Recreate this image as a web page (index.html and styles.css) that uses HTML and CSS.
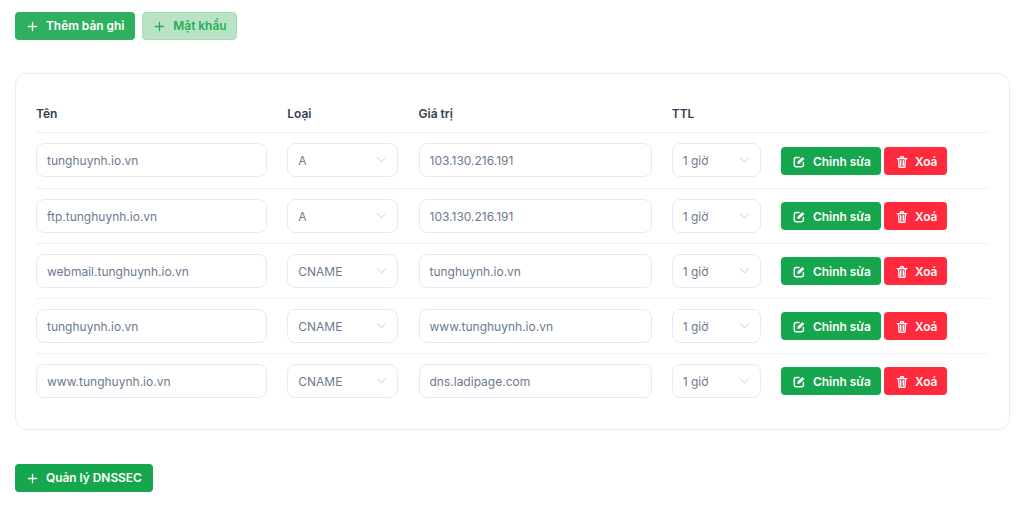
FILE: index.html
```html
<!DOCTYPE html>
<html lang="vi">
<head>
<meta charset="utf-8">
<title>DNS</title>
<link rel="stylesheet" href="styles.css">
</head>
<body>
<svg class="defs" width="0" height="0" aria-hidden="true">
  <symbol id="plus" viewBox="0 0 12 12"><path d="M6 1.5v9M1.5 6h9" fill="none" stroke="currentColor" stroke-width="1.4" stroke-linecap="round"/></symbol>
  <symbol id="edit" viewBox="0 0 12 12"><path d="M10.4 6.6v2.4a1.7 1.7 0 0 1-1.7 1.7H3a1.7 1.7 0 0 1-1.7-1.7V3.3A1.7 1.7 0 0 1 3 1.6h3" fill="none" stroke="currentColor" stroke-width="1.5" stroke-linecap="round"/><path d="M4.3 7.9l.4-2.3L9.4.9l2 2-4.7 4.6z" fill="currentColor"/></symbol>
  <symbol id="trash" viewBox="0 0 12 12"><path d="M4.2 2.2 4.8.8h2.4l.6 1.4M1.2 2.6h9.6" fill="none" stroke="currentColor" stroke-width="1.4" stroke-linecap="round" stroke-linejoin="round"/><path d="M2.5 3l.5 7.5c0 .5.3.8.8.8h4.4c.5 0 .8-.3.8-.8l.5-7.5M4.7 4.8v4.5M7.3 4.8v4.5" fill="none" stroke="currentColor" stroke-width="1.4" stroke-linecap="round" stroke-linejoin="round"/></symbol>
  <symbol id="chev" viewBox="0 0 12 8"><path d="M1.5 1.5 6 6l4.5-4.5" fill="none" stroke="currentColor" stroke-width="1.1" stroke-linecap="round" stroke-linejoin="round"/></symbol>
</svg>

<div class="toolbar">
  <button class="btn green wide"><svg class="ico"><use href="#plus"/></svg>Thêm bản ghi</button>
  <button class="btn soft wide"><svg class="ico"><use href="#plus"/></svg>Mật khẩu</button>
</div>

<section class="card">
  <div class="row head">
    <div>Tên</div><div>Loại</div><div>Giá trị</div><div>TTL</div><div></div>
  </div>

  <div class="row">
    <div class="field">tunghuynh.io.vn</div>
    <div class="field select">A<svg class="chev"><use href="#chev"/></svg></div>
    <div class="field">103.130.216.191</div>
    <div class="field select">1 giờ<svg class="chev"><use href="#chev"/></svg></div>
    <div class="actions">
      <button class="btn green2 edit"><svg class="ico"><use href="#edit"/></svg>Chỉnh sửa</button>
      <button class="btn red del"><svg class="ico"><use href="#trash"/></svg>Xoá</button>
    </div>
  </div>

  <div class="row">
    <div class="field">ftp.tunghuynh.io.vn</div>
    <div class="field select">A<svg class="chev"><use href="#chev"/></svg></div>
    <div class="field">103.130.216.191</div>
    <div class="field select">1 giờ<svg class="chev"><use href="#chev"/></svg></div>
    <div class="actions">
      <button class="btn green2 edit"><svg class="ico"><use href="#edit"/></svg>Chỉnh sửa</button>
      <button class="btn red del"><svg class="ico"><use href="#trash"/></svg>Xoá</button>
    </div>
  </div>

  <div class="row">
    <div class="field">webmail.tunghuynh.io.vn</div>
    <div class="field select">CNAME<svg class="chev"><use href="#chev"/></svg></div>
    <div class="field">tunghuynh.io.vn</div>
    <div class="field select">1 giờ<svg class="chev"><use href="#chev"/></svg></div>
    <div class="actions">
      <button class="btn green2 edit"><svg class="ico"><use href="#edit"/></svg>Chỉnh sửa</button>
      <button class="btn red del"><svg class="ico"><use href="#trash"/></svg>Xoá</button>
    </div>
  </div>

  <div class="row">
    <div class="field">tunghuynh.io.vn</div>
    <div class="field select">CNAME<svg class="chev"><use href="#chev"/></svg></div>
    <div class="field">www.tunghuynh.io.vn</div>
    <div class="field select">1 giờ<svg class="chev"><use href="#chev"/></svg></div>
    <div class="actions">
      <button class="btn green2 edit"><svg class="ico"><use href="#edit"/></svg>Chỉnh sửa</button>
      <button class="btn red del"><svg class="ico"><use href="#trash"/></svg>Xoá</button>
    </div>
  </div>

  <div class="row">
    <div class="field">www.tunghuynh.io.vn</div>
    <div class="field select">CNAME<svg class="chev"><use href="#chev"/></svg></div>
    <div class="field">dns.ladipage.com</div>
    <div class="field select">1 giờ<svg class="chev"><use href="#chev"/></svg></div>
    <div class="actions">
      <button class="btn green2 edit"><svg class="ico"><use href="#edit"/></svg>Chỉnh sửa</button>
      <button class="btn red del"><svg class="ico"><use href="#trash"/></svg>Xoá</button>
    </div>
  </div>
</section>

<div class="footer">
  <button class="btn green2 wide"><svg class="ico"><use href="#plus"/></svg>Quản lý DNSSEC</button>
</div>
</body>
</html>
```

FILE: styles.css
```css
* { box-sizing: border-box; }
html, body { margin: 0; background: #fff; }
body {
  height: 522px;
  overflow: hidden;
  padding: 12px 14px 0 15px;
  font-family: Inter, "Liberation Sans", sans-serif;
  font-size: 12px;
  color: #334155;
}
.defs { position: absolute; }
.toolbar { display: flex; gap: 7px; height: 28px; }
.btn {
  display: inline-flex;
  align-items: center;
  height: 28px;
  padding: 1px 11px 0 12px;
  border: 0;
  border-radius: 4px;
  font: 600 11.9px/1 Inter, "Liberation Sans", sans-serif;
  white-space: nowrap;
}
.btn.wide { padding-top: 0; }
.ico { width: 12px; height: 12px; flex: none; margin-right: 8px; }
.wide .ico { width: 11px; height: 11px; margin-right: 8px; }
.green { background: #2fb060; color: #fff; }
.green2 { background: #16a74e; color: #fff; }
.soft {
  padding: 0 9px 0 11px;
  background: #b8e4c5;
  color: #22ad58;
  border: 1px solid #a8dcb8;
}
.red { background: #ff2a3b; color: #fff; }

.card {
  margin-top: 33px;
  height: 357px;
  padding: 18px 20px 0 20px;
  border: 1px solid #e9edf3;
  border-radius: 12px;
}
.row {
  display: grid;
  grid-template-columns: 231px 111px 233px 89px 1fr;
  column-gap: 20.25px;
  align-items: start;
  height: 55px;
  padding-top: 10px;
  border-top: 1px solid #eef1f6;
}
.row.head + .row { height: 56px; }
.row.head {
  height: 40px;
  border-top: 0;
  padding-top: 14px;
  font-weight: 600;
  color: #334155;
}
.field {
  display: flex;
  align-items: center;
  justify-content: space-between;
  height: 34px;
  padding: 0 10px;
  border: 1px solid #e6ebf3;
  border-radius: 8px;
  background: #fff;
  font-size: 12px;
  color: #6b7a90;
}
.chev { width: 11px; height: 8px; color: #d5dce6; margin-right: 0; }
.actions { display: flex; gap: 3px; margin-top: 3px; }
.row.head + .row .actions { margin-top: 4px; }
.edit { width: 100px; }
.del { width: 63px; }
.del .ico { margin-right: 7px; }
.footer { margin-top: 34px; }
```
